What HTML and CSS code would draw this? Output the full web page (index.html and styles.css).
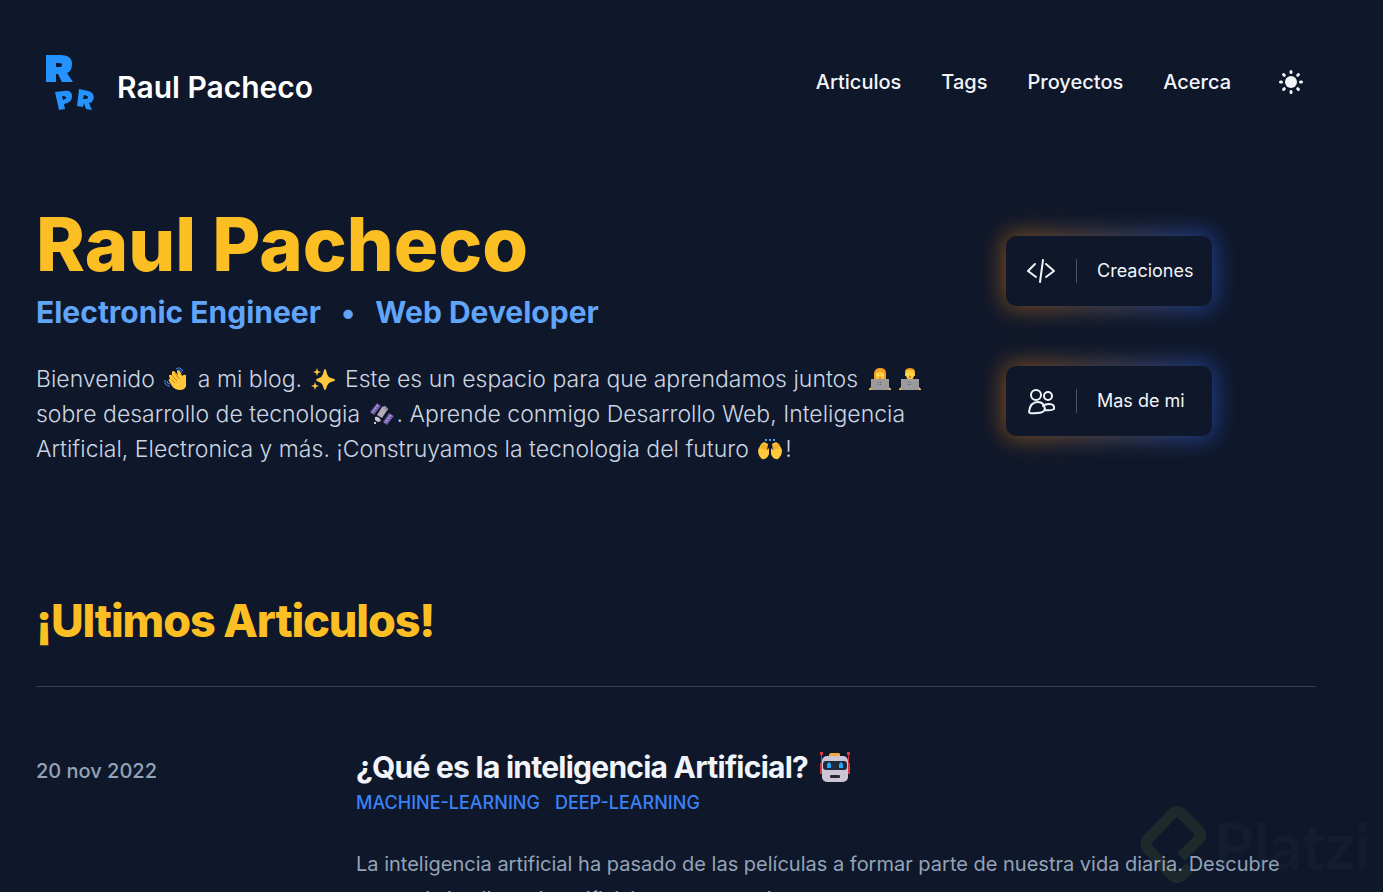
FILE: index.html
```html
<!DOCTYPE html>
<html lang="es">
<head>
  <meta charset="UTF-8">
  <meta name="viewport" content="width=device-width, initial-scale=1">
  <title>Raul Pacheco</title>
  <link rel="stylesheet" href="styles.css">
</head>
<body>
  <div class="container">
    <header class="header">
      <a class="brand" href="#">
        <svg class="brand-logo" viewBox="0 0 50 56" fill="#2492ff" fill-rule="evenodd" aria-hidden="true">
          <path d="M0 1H14C22 1 26 4 26 10C26 15 24 18 21 19L27 28H16L12 20H10V28H0ZM10 9V13H13Q16 13 16 11Q16 9 13 9Z"/>
          <path d="M9 38L18 37C23 36 26 38 26 42C26 47 23 49 18 50L19 55L13 56ZM16 42L17 46L19 45Q21 44 20 43Q19 42 16 42Z"/>
          <path d="M33 35L42 37C47 38 49 42 47 46Q46 49 43 49L46 56L40 55L38 49L37 53L31 52ZM38 41L37 45L40 45Q42 45 42 43Q42 42 38 41Z"/>
        </svg>
        <span>Raul Pacheco</span>
      </a>
      <nav class="nav">
        <a href="#">Articulos</a>
        <a href="#">Tags</a>
        <a href="#">Proyectos</a>
        <a href="#">Acerca</a>
        <button class="theme-toggle" type="button" aria-label="Cambiar tema">
          <svg viewBox="0 0 24 24" stroke="currentColor" stroke-width="3" stroke-linecap="round" aria-hidden="true">
            <circle cx="12" cy="12" r="6" fill="currentColor" stroke="none"/>
            <path d="M12 1.500v1M12 21.500v1M1.500 12h1M21.500 12h1M4.600 4.600l.7.700M18.700 18.700l.7.700M4.600 19.400l.7-.7M18.700 5.300l.7-.7"/>
          </svg>
        </button>
      </nav>
    </header>

    <main>
      <section class="hero">
        <div class="intro">
          <h1>Raul Pacheco</h1>
          <h2>Electronic Engineer <span class="dot">•</span> Web Developer</h2>
          <p>Bienvenido
            <svg class="emoji" viewBox="0 0 24 24" aria-hidden="true">
              <path fill="#ffc83d" d="M8 5Q9 3 11 5L14 8Q12 3 14 3Q16 3 18 9Q20 7 22 8V19Q21 23 16 23Q11 23 8 19L5 14Q4 12 6 12L5 9Q5 7 8 8Z"/>
              <path fill="none" stroke="#d67d00" d="M8 8l5 6M11 6l4 6M7 12l4 4"/>
              <path fill="none" stroke="#4a8ff0" d="M12 2q4-3 7 2M14 3q3-1 4 3M1 13q-1 6 5 6M3 14q0 3 3 3"/>
            </svg>
            a mi blog.
            <svg class="emoji" viewBox="0 0 24 24" fill="#ffc83d" aria-hidden="true">
              <path d="M14 2Q15 2 16 7Q17 10 20 11Q24 12 24 13Q24 14 20 15Q17 16 16 19Q15 23 14 23Q13 23 12 19Q11 16 8 15Q5 14 5 13Q5 12 8 11Q11 10 12 7Q13 2 14 2Z"/>
              <path d="M6 1L7 4L10 5L7 6L6 9L5 6L2 5L5 4ZM4 15L5 18L8 19L5 20L4 23L3 20L0 19L3 18Z"/>
            </svg>
            Este es un espacio para que aprendamos juntos
            <svg class="emoji" viewBox="0 0 24 24" aria-hidden="true">
              <path fill="#f59f22" d="M6 13V6Q7 1 12 1Q18 1 18 6V13Z"/>
              <path fill="#ffc83d" d="M8 6Q12 3 16 6V10Q15 13 12 13Q9 13 8 10ZM1 22l3-3v4H1zM23 22l-3-3v4h3z"/>
              <path stroke="#e9fb78" d="M8 8h3M13 8h3"/><path stroke="#bc4b12" d="M11 11h2"/>
              <path fill="#9b9b9b" d="M3 12h18v11H3z"/><path fill="#5d5d7a" d="M10 15h1v1h-1zM12 15h1v1h-1zM10 17h1v1h-1zM12 17h1v1h-1z"/>
            </svg><svg class="emoji" viewBox="0 0 24 24" aria-hidden="true">
              <path fill="#f59f22" d="M7 7Q6 1 12 1Q18 1 17 7Z"/>
              <path fill="#ffc83d" d="M8 4Q12 2 16 4V7h1v2h-1Q15 13 12 13Q9 13 8 9H7V7h1ZM1 22l3-3v4H1zM23 22l-3-3v4h3z"/>
              <path stroke="#e9fb78" d="M8 7h3M13 7h3"/><path stroke="#bc4b12" d="M11 10h2"/>
              <path fill="#9b9b9b" d="M3 12h18v11H3z"/><path fill="#5d5d7a" d="M10 15h1v1h-1zM12 15h1v1h-1zM10 17h1v1h-1zM12 17h1v1h-1z"/>
            </svg>
            sobre desarrollo de tecnologia
            <svg class="emoji" viewBox="0 0 24 24" aria-hidden="true">
              <path fill="#6b579e" d="M7 1l4 3-7 9-4-3zM19 11l5 3-7 9-4-3z"/>
              <path stroke="#b09ae0" stroke-width="2" stroke-dasharray="2 1" d="M8 3l-6 8M21 13l-6 8"/>
              <path fill="#b4acbc" d="M15 4l3 3-6 9-5-3 5-8z"/>
              <path fill="#998ea2" d="M13 6l4 3 1-2-3-3z"/>
              <path fill="#cdc4d6" d="M5 15q4-1 6 4l-3 1-3-2zM4 20h2v2H4z"/>
            </svg>. Aprende conmigo Desarrollo Web, Inteligencia Artificial, Electronica y más. ¡Construyamos la tecnologia del futuro
            <svg class="emoji" viewBox="0 0 24 24" aria-hidden="true">
              <path fill="#ffc83d" d="M0 13L3 7L6 5L10 7L9 13L11 11V17Q9 23 4 22Q0 19 0 13ZM24 13L21 7L18 5L14 7L15 13L13 11V17Q15 23 20 22Q24 19 24 13Z"/>
              <path stroke="#e69a16" d="M4 7v5M6 7v5M8 8v5M20 7v5M18 7v5M16 8v5"/>
              <path stroke="#4a9ff0" stroke-width="2" d="M7 3h2M12 2v2M15 3h2"/>
            </svg>!
          </p>
        </div>
        <div class="links">
          <a class="card" href="#">
            <span class="card-inner">
              <svg viewBox="0 0 30 30" aria-hidden="true"><path d="M9 8l-7 7 8 6M20 8l8 7-8 6M17 4l-3 22"/></svg>
              <span class="card-text">Creaciones</span>
            </span>
          </a>
          <a class="card" href="#">
            <span class="card-inner">
              <svg viewBox="0 0 30 30" aria-hidden="true"><circle cx="10" cy="9" r="5"/><circle cx="22" cy="10" r="4"/><path d="M3 26Q4 16 12 16Q18 16 19 23Q18 27 11 27Q3 28 3 26ZM17 20Q19 18 23 18Q29 18 28 23Q25 25 19 24"/></svg>
              <span class="card-text">Mas de mi</span>
            </span>
          </a>
        </div>
      </section>

      <section class="latest">
        <h2>¡Ultimos Articulos!</h2>
        <article class="post">
          <time datetime="2022-11-20">20 nov 2022</time>
          <div class="post-body">
            <h3><a href="#">¿Qué es la inteligencia Artificial?
              <svg class="robot" viewBox="0 0 30 30" aria-hidden="true">
                <path fill="#d8383e" d="M0 0h3v3H2v8H1V3H0zM27 0h3v3h-1v8h-1V3h-1zM0 11h4v11H0zM26 11h4v11h-4z"/>
                <path fill="#f5a83b" d="M9 2l2-1h8l1 1v3H9z"/>
                <rect x="2" y="4" width="26" height="26" rx="5" fill="#cdc4d6"/>
                <rect x="3" y="9" width="24" height="9" rx="3" fill="#1f2b3d"/>
                <path fill="#26a7ef" d="M7 12l2-2 2 2v4H7zM19 12l2-2 2 2v4h-4z"/>
                <rect x="10" y="23" width="10" height="3" rx="1" fill="#2a2634"/>
              </svg></a></h3>
            <div class="tags"><a href="#">machine-learning</a><a href="#">deep-learning</a></div>
            <p>La inteligencia artificial ha pasado de las películas a formar parte de nuestra vida diaria. Descubre que es la inteligencia artificial y como nos sirve.</p>
          </div>
        </article>
      </section>
    </main>
  </div>

  <div class="watermark" aria-hidden="true">
    <svg viewBox="0 0 66 78" fill="none" stroke="#98ca3f" stroke-width="11" stroke-linejoin="round"><path d="M41 51L59 33Q62 29 59 25L42 8Q37 3 32 8L8 33Q4 38 8 43L32 69Q37 74 42 69L50 61"/></svg>
    <span>Platzi</span>
  </div>
</body>
</html>
```
FILE: styles.css
```css
* { box-sizing: border-box; }
html { overflow: hidden; }
body { margin: 0; height: 100vh; overflow: hidden; background: #0f172a; color: #f1f5f9; font-family: Inter, "Noto Sans", sans-serif; }
a { color: inherit; text-decoration: none; }
h1, h2, h3, p { margin: 0; }
.container { padding: 0 67px 0 36px; }

.header { display: flex; align-items: center; justify-content: space-between; height: 164px; }
.brand { display: flex; align-items: center; gap: 21px; padding-left: 10px; color: #fff; font-size: 30px; font-weight: 600; line-height: 36px; }
.brand span { padding-top: 10px; }
.brand-logo { width: 50px; height: 56px; }
.nav { display: flex; align-items: center; gap: 40px; padding-right: 13px; font-size: 20px; font-weight: 500; line-height: 30px; }
.theme-toggle { display: flex; margin-left: 8px; padding: 0; border: 0; background: none; color: #f1f5f9; cursor: pointer; }
.theme-toggle svg { width: 24px; height: 24px; }

.hero { display: grid; grid-template-columns: minmax(0, 1fr) 310px; gap: 80px; padding-top: 40px; }
.intro h1 { color: #fbbf24; font-size: 74px; font-weight: 800; line-height: 80px; }
.intro h2 { margin-top: 9px; color: #60a5fa; font-size: 30px; font-weight: 700; line-height: 38px; }
.dot { margin: 0 13px; }
.intro p { margin-top: 31px; color: #cbd5e1; font-size: 23px; font-weight: 300; line-height: 35px; }
.emoji { width: 24px; height: 24px; margin: 0 3px; vertical-align: -4px; }
.links { display: flex; flex-direction: column; align-items: flex-start; gap: 60px; padding-top: 32px; }
.card { position: relative; border-radius: 10px; }
.card::before { content: ""; position: absolute; inset: -2px; border-radius: 10px; background: linear-gradient(90deg, #d97706, #2563eb); filter: blur(12px); opacity: 0.6; }
.card-inner { position: relative; display: flex; align-items: center; width: 206px; height: 70px; padding: 0 19px 0 20px; border-radius: 10px; background: #0f172a; }
.card svg { flex: none; width: 30px; height: 30px; fill: none; stroke: #f1f5f9; stroke-width: 2; stroke-linecap: round; stroke-linejoin: round; }
.card-text { margin-left: 20px; padding-left: 20px; border-left: 1px solid #475569; font-size: 18px; line-height: 24px; }

.latest { padding-top: 119px; }
.latest > h2 { padding-bottom: 30px; border-bottom: 1px solid #334155; color: #fbbf24; font-size: 45px; font-weight: 800; line-height: 70px; letter-spacing: -0.025em; }
.post { display: grid; grid-template-columns: 1fr 3fr; padding-top: 60px; }
.post time { padding-top: 9px; color: #94a3b8; font-size: 20px; font-weight: 500; line-height: 30px; }
.post h3 { font-size: 30px; font-weight: 700; line-height: 40px; letter-spacing: -0.025em; }
.robot { width: 30px; height: 30px; margin-left: 6px; vertical-align: -4px; }
.tags { display: flex; gap: 15px; margin-top: 1px; color: #3b82f6; font-size: 18px; font-weight: 500; line-height: 30px; text-transform: uppercase; }
.post p { margin-top: 29px; color: #94a3b8; font-size: 20px; line-height: 35px; }

.watermark { position: fixed; right: 12px; bottom: 8px; display: flex; align-items: center; gap: 8px; opacity: 0.1; font-family: Lato, sans-serif; font-size: 64px; font-weight: 700; line-height: 78px; color: #475569; }
.watermark svg { width: 66px; height: 78px; }
```
